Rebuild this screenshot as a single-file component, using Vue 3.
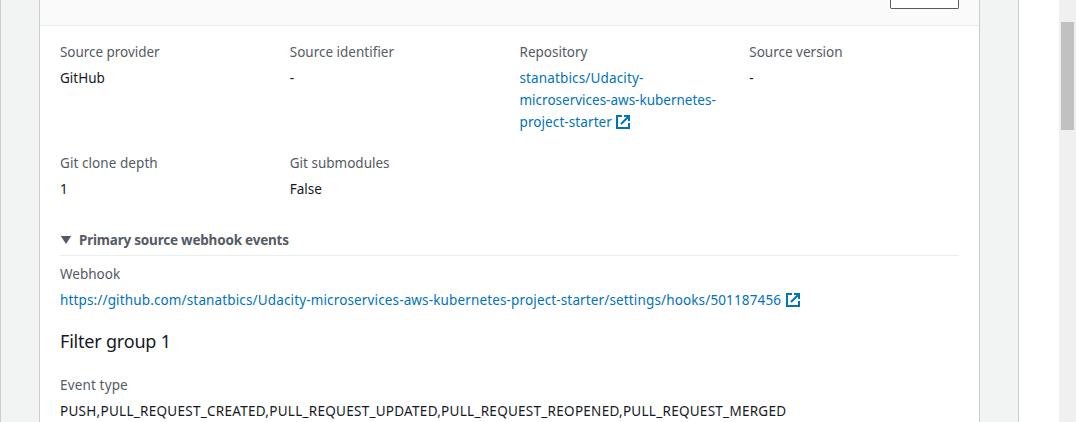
<script setup>
const firstRow = [
  { label: 'Source provider', value: 'GitHub', cls: 'provider' },
  { label: 'Source identifier', value: '-', cls: 'identifier' },
  {
    label: 'Repository',
    cls: 'repository',
    lines: ['stanatbics/Udacity-', 'microservices-aws-kubernetes-', 'project-starter'],
  },
  { label: 'Source version', value: '-', cls: 'version' },
]
const secondRow = [
  { label: 'Git clone depth', value: '1', cls: 'depth' },
  { label: 'Git submodules', value: 'False', cls: 'submodules' },
]
const hookUrl =
  'https://github.com/stanatbics/Udacity-microservices-aws-kubernetes-project-starter/settings/hooks/501187456'
const events =
  'PUSH,PULL_REQUEST_CREATED,PULL_REQUEST_UPDATED,PULL_REQUEST_REOPENED,PULL_REQUEST_MERGED'
</script>

<template>
  <div class="page">
    <main class="content">
      <section class="panel">
        <header class="panel-header"><button class="edit" aria-label="Edit"></button></header>
        <div class="body">
          <div class="grid first">
            <div v-for="f in firstRow" :key="f.label" :class="f.cls">
              <div class="label"><span>{{ f.label }}</span></div>
              <a v-if="f.lines" class="value link">
                <span v-for="(line, i) in f.lines" :key="line" class="line" :class="'l' + i">
                  <span>{{ line }}</span>
                  <svg v-if="i === 2" class="ext" viewBox="0 0 14 14">
                    <path d="M6 1H1v12h12V8M8 1h5v5M12.5 1.5L5 9" />
                  </svg>
                </span>
              </a>
              <div v-else class="value">{{ f.value }}</div>
            </div>
          </div>
          <div class="grid second">
            <div v-for="f in secondRow" :key="f.label" :class="f.cls">
              <div class="label"><span>{{ f.label }}</span></div>
              <div class="value">{{ f.value }}</div>
            </div>
          </div>
          <div class="expander">
            <svg class="caret" viewBox="0 0 12 10"><path d="M0.8 1h10.4L6 9z" /></svg>
            <span>Primary source webhook events</span>
          </div>
          <div class="webhook">
            <div class="label">Webhook</div>
            <a class="value link line">
              <span class="url">{{ hookUrl }}</span>
              <svg class="ext" viewBox="0 0 14 14">
                <path d="M6 1H1v12h12V8M8 1h5v5M12.5 1.5L5 9" />
              </svg>
            </a>
          </div>
          <h3>Filter group 1</h3>
          <div class="label event-label">Event type</div>
          <div class="value"><span class="events">{{ events }}</span></div>
        </div>
      </section>
    </main>
    <aside class="scrollbar"><div class="thumb"></div></aside>
  </div>
</template>

<style scoped>
.page {
  display: flex;
  justify-content: space-between;
  width: 1076px;
  height: 422px;
  overflow: hidden;
  background: #fff;
  font: 13.5px/22px 'Noto Sans', sans-serif;
  color: #16191f;
}
.content {
  box-sizing: border-box;
  width: 1019px;
  padding: 0 38px;
  background: #f2f3f3;
  border: solid #c8cfcf;
  border-width: 0 1px;
}
.panel {
  box-sizing: border-box;
  width: 941px;
  height: 422px;
  border: solid #c8cccc;
  border-width: 0 1px;
  background: #fff;
}
.panel-header {
  box-sizing: border-box;
  display: flex;
  justify-content: flex-end;
  height: 26px;
  padding-right: 20px;
  background: #fafafa;
  border-bottom: 1px solid #eaeded;
}
.edit {
  box-sizing: border-box;
  width: 69px;
  height: 9px;
  padding: 0;
  background: #fff;
  border: 1px solid #545b64;
  border-top: 0;
  border-radius: 0 0 2px 2px;
}
.body { padding: 15px 20px 0; white-space: nowrap; }
.grid {
  display: grid;
  grid-template-columns: repeat(4, 1fr);
  column-gap: 20px;
}
.first { height: 111px; }
.second { height: 77px; }
.label { color: #545b64; height: 22px; margin-bottom: 4px; }
.value { height: 22px; }
.link { color: #0073bb; display: block; }
.line { display: flex; align-items: center; height: 22px; }
.ext {
  width: 14px;
  height: 14px;
  margin-left: 5px;
  fill: none;
  stroke: #0073bb;
  stroke-width: 2;
}
.l0 { letter-spacing: 0.14px; }
.l2 { letter-spacing: 0.09px; }
.l2 .ext { margin-left: 4px; }
.provider .label { letter-spacing: -0.04px; }
.depth .label { letter-spacing: 0.07px; }
.url { letter-spacing: 0.141px; }
.events { letter-spacing: 0.275px; }
.expander {
  display: flex;
  align-items: center;
  box-sizing: border-box;
  height: 27px;
  padding-bottom: 4px;
  border-bottom: 1px solid #eaeded;
  font-weight: 700;
  color: #545b64;
  letter-spacing: -0.21px;
}
.caret { width: 12px; height: 10px; margin-right: 7px; fill: #545b64; }
.webhook { padding-top: 7px; }
h3 {
  margin: 19px 0 0;
  font-size: 18px;
  font-weight: 400;
  line-height: 22px;
  letter-spacing: -0.2px;
}
.event-label { margin-top: 22px; letter-spacing: 0.15px; }
.scrollbar {
  box-sizing: border-box;
  width: 17px;
  height: 422px;
  padding: 22px 2px 0;
  background: #f0f0f0;
}
.thumb { width: 13px; height: 108px; background: #c1c1c1; }
</style>
